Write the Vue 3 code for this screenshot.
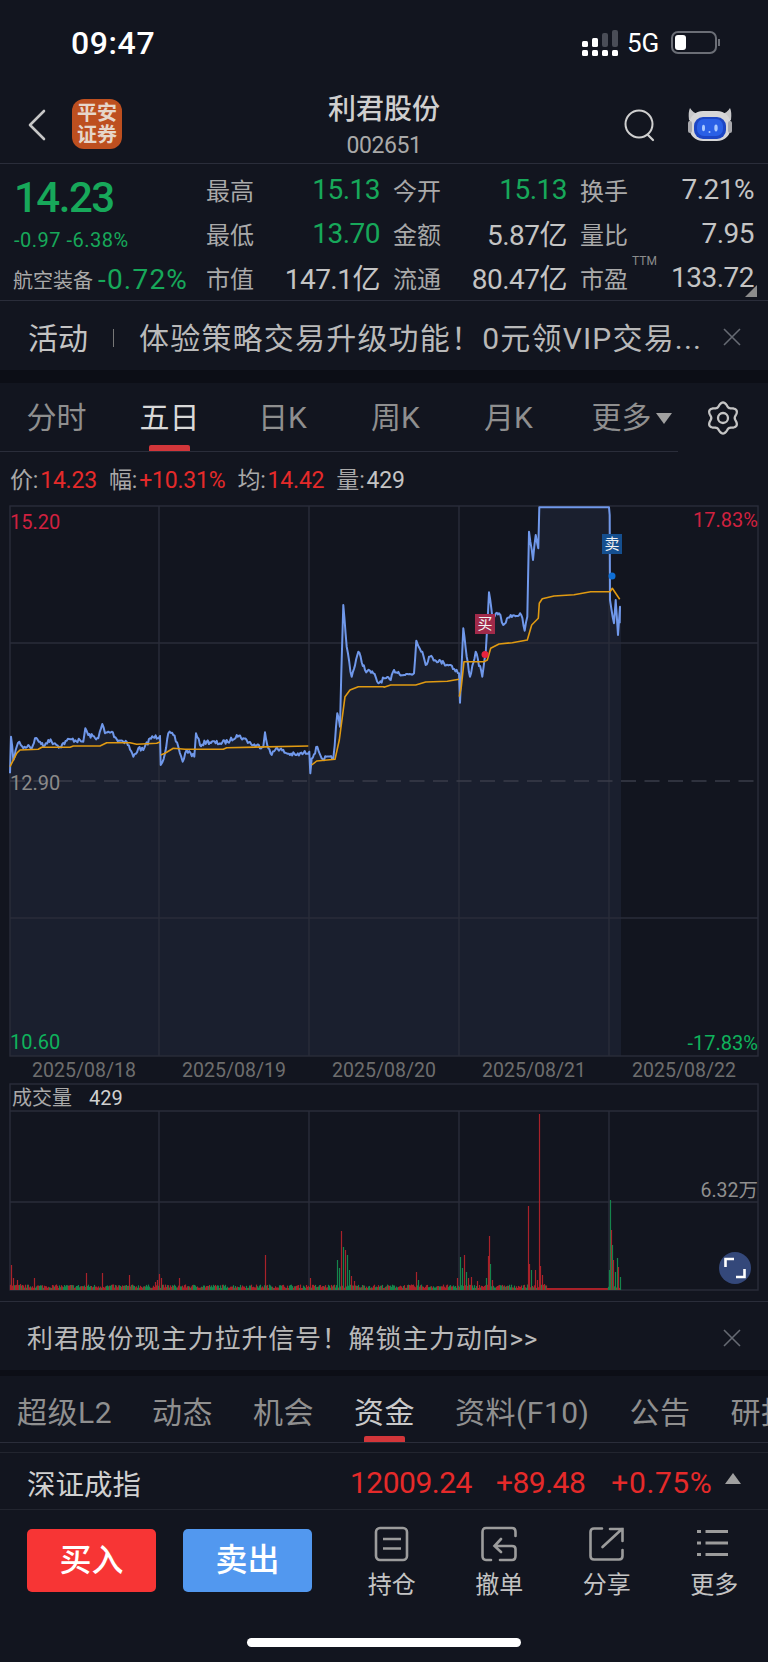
<template>
  <div class="page">
    <!-- status bar -->
    <div class="status">
      <span class="clock">09:47</span>
      <svg class="signal" width="38" height="26" viewBox="0 0 38 26">
        <rect x="20" y="3" width="6" height="14" rx="2" fill="#4a4d57" />
        <rect x="30" y="0" width="6" height="17" rx="2" fill="#4a4d57" />
        <rect x="0" y="11" width="6" height="6" rx="1.5" fill="#fff" />
        <rect x="10" y="8" width="6" height="9" rx="1.5" fill="#fff" />
        <rect x="0" y="20" width="6" height="6" rx="1.5" fill="#fff" />
        <rect x="10" y="20" width="6" height="6" rx="1.5" fill="#fff" />
        <rect x="20" y="20" width="6" height="6" rx="1.5" fill="#fff" />
        <rect x="30" y="20" width="6" height="6" rx="1.5" fill="#fff" />
      </svg>
      <span class="net">5G</span>
      <div class="battery"><div class="battery-fill"></div></div>
      <div class="battery-nub"></div>
    </div>

    <!-- title -->
    <div class="header">
      <svg class="back" width="20" height="32" viewBox="0 0 20 32">
        <path d="M17 2 L3 16 L17 30" fill="none" stroke="#c6c6c6" stroke-width="2.6" stroke-linecap="round" stroke-linejoin="round" />
      </svg>
      <div class="logo">平安<br />证券</div>
      <div class="title">
        <div class="name">利君股份</div>
        <div class="code">002651</div>
      </div>
      <svg class="search" width="34" height="34" viewBox="0 0 34 34">
        <circle cx="15" cy="15" r="13.5" fill="none" stroke="#cfcfcf" stroke-width="2" />
        <path d="M24 26 L29 31" stroke="#cfcfcf" stroke-width="2.2" stroke-linecap="round" />
      </svg>
      <svg class="robot" width="44" height="34" viewBox="0 0 44 34">
        <path d="M1 12 Q0 4 2 0 Q5 5 10 6 L34 6 Q39 5 42 0 Q44 4 43 12 Z" fill="#c8c8ca" />
        <rect x="1" y="3" width="42" height="30" rx="14" fill="#d6d6d8" />
        <rect x="0" y="13" width="4" height="12" rx="2" fill="#a9a9ad" />
        <rect x="40" y="13" width="4" height="12" rx="2" fill="#a9a9ad" />
        <rect x="6" y="9" width="32" height="22" rx="9" fill="#1d46c4" />
        <rect x="9" y="11" width="26" height="17" rx="7" fill="#2a60e6" />
        <ellipse cx="15.5" cy="20" rx="1.5" ry="3.2" fill="#a9c8ff" />
        <ellipse cx="28" cy="20" rx="1.7" ry="3.4" fill="#a9c8ff" />
        <circle cx="21.5" cy="24" r="1" fill="#a9c8ff" />
      </svg>
    </div>

    <!-- quote -->
    <div class="quote">
      <div class="quote-left">
        <div class="last">14.23</div>
        <div class="change">-0.97 -6.38%</div>
        <div class="sector"><span>航空装备</span><b>-0.72%</b></div>
      </div>
      <div class="stats">
        <div v-for="s in stats" :key="s.label" class="stat">
          <span class="stat-label">{{ s.label }}<sup v-if="s.ttm">TTM</sup></span>
          <span class="stat-value" :class="{ up: s.green }">{{ s.value }}</span>
        </div>
      </div>
      <div class="corner"></div>
    </div>

    <!-- activity banner -->
    <div class="banner">
      <span class="tag">活动</span>
      <i class="sep"></i>
      <span class="promo">体验策略交易升级功能！0元领VIP交易...</span>
      <svg class="close" width="18" height="18" viewBox="0 0 18 18">
        <path d="M1 1 L17 17 M17 1 L1 17" stroke="#666a73" stroke-width="1.6" />
      </svg>
    </div>
    <div class="band"></div>

    <!-- chart tabs -->
    <div class="chart-tabs">
      <div class="chart-tab-list">
        <div v-for="t in chartTabs" :key="t" class="chart-tab" :class="{ active: t === '五日' }">
          {{ t }}<i v-if="t === '更多'" class="caret"></i>
        </div>
      </div>
      <svg class="gear" width="34" height="34" viewBox="0 0 34 34">
        <path :d="gearPath" fill="none" stroke="#c4c4c4" stroke-width="2.3" stroke-linejoin="round" />
        <circle cx="17" cy="17" r="5" fill="none" stroke="#c4c4c4" stroke-width="2.3" />
      </svg>
    </div>

    <div class="info">
      <span>价:<em>14.23</em></span>
      <span>幅:<em>+10.31%</em></span>
      <span>均:<em>14.42</em></span>
      <span>量:<strong>429</strong></span>
    </div>

    <!-- price chart -->
    <div class="price-chart">
      <svg width="751" height="553" viewBox="9 505 751 553">
        <polygon :points="fillPoints" fill="#1a1f2e" />
        <rect x="10" y="506" width="748" height="550" fill="none" stroke="#2a2d3a" stroke-width="1.4" />
        <path d="M159 506V1056M309 506V1056M459 506V1056M609 506V1056M10 643H758M10 918H758" stroke="#2a2d3a" stroke-width="1.4" />
        <path d="M10 781H758" stroke="#3a3d49" stroke-width="1.4" stroke-dasharray="15 8.5" />
        <polyline :points="pricePoints" fill="none" stroke="#7098ea" stroke-width="2" stroke-linejoin="round" />
        <polyline v-for="(a, i) in avgLines" :key="i" :points="a" fill="none" stroke="#e09a12" stroke-width="1.6" stroke-linejoin="round" />
        <circle cx="485" cy="654.5" r="3.5" fill="#e8233f" />
        <circle cx="612" cy="576" r="3.5" fill="#0f6fd6" />
      </svg>
      <span class="axis tl">15.20</span>
      <span class="axis ml">12.90</span>
      <span class="axis bl">10.60</span>
      <span class="axis tr">17.83%</span>
      <span class="axis br">-17.83%</span>
      <span class="flag buy">买</span>
      <span class="flag sell">卖</span>
    </div>

    <div class="dates">
      <span v-for="d in dates" :key="d">{{ d }}</span>
    </div>

    <!-- volume chart -->
    <div class="volume-chart">
      <svg width="751" height="208" viewBox="9 1083 751 208">
        <rect x="10" y="1084" width="748" height="206" fill="none" stroke="#2a2d3a" stroke-width="1.4" />
        <path d="M159 1111V1290M309 1111V1290M459 1111V1290M609 1111V1290M10 1111H758M10 1202H758" stroke="#2a2d3a" stroke-width="1.4" />
        <path v-for="(b, i) in volumeBars" :key="i" :d="b.d" :stroke="b.c" stroke-width="1.2" />
      </svg>
      <div class="vol-label">成交量<strong>429</strong></div>
      <span class="vol-max">6.32万</span>
      <div class="expand">
        <svg width="22" height="22" viewBox="0 0 22 22">
          <path d="M1.5 10V2H10M20.5 12V20H12" fill="none" stroke="#fff" stroke-width="2.6" />
        </svg>
      </div>
    </div>

    <div class="line-gap"></div>

    <div class="banner banner-low">
      <span class="promo-low">利君股份现主力拉升信号！解锁主力动向&gt;&gt;</span>
      <svg class="close" width="18" height="18" viewBox="0 0 18 18">
        <path d="M1 1 L17 17 M17 1 L1 17" stroke="#666a73" stroke-width="1.6" />
      </svg>
    </div>
    <div class="band band-low"></div>

    <!-- info tabs -->
    <div class="info-tabs">
      <div v-for="t in infoTabs" :key="t" class="info-tab" :class="{ active: t === '资金' }">{{ t }}</div>
    </div>
    <div class="tab-gap"></div>

    <!-- index ticker -->
    <div class="index">
      <span class="index-name">深证成指</span>
      <span class="index-num">12009.24</span>
      <span class="index-num">+89.48</span>
      <span class="index-num pct">+0.75%</span>
      <i class="index-caret"></i>
    </div>

    <!-- bottom actions -->
    <div class="actions">
      <div class="btn buy-btn">买入</div>
      <div class="btn sell-btn">卖出</div>
      <div class="tools">
        <div class="tool">
          <svg width="36" height="36" viewBox="0 0 36 36">
            <rect x="2" y="2" width="31" height="32" rx="4" fill="none" stroke="#9c9c9c" stroke-width="2.6" />
            <path d="M9 13H27M9 22.5H27" stroke="#9c9c9c" stroke-width="2.6" />
          </svg>
          <span>持仓</span>
        </div>
        <div class="tool">
          <svg width="36" height="36" viewBox="0 0 36 36">
            <path d="M10 34H5Q1.5 34 1.5 30V6Q1.5 2 5 2H31Q34.5 2 34.5 6V10" fill="none" stroke="#9c9c9c" stroke-width="2.6" stroke-linecap="round" />
            <path d="M20 13L13.5 20L20 26M14 20H31Q34.5 20 34.5 23V30Q34.5 34 31 34H19" fill="none" stroke="#9c9c9c" stroke-width="2.6" stroke-linecap="round" />
          </svg>
          <span>撤单</span>
        </div>
        <div class="tool">
          <svg width="36" height="36" viewBox="0 0 36 36">
            <path d="M13 2.5H5Q1.5 2.5 1.5 6V30Q1.5 33.5 5 33.5H30Q33.5 33.5 33.5 30V24" fill="none" stroke="#9c9c9c" stroke-width="2.6" stroke-linecap="round" />
            <path d="M13.5 21L33 3M21 3H33.5V15" fill="none" stroke="#9c9c9c" stroke-width="2.6" stroke-linecap="round" />
          </svg>
          <span>分享</span>
        </div>
        <div class="tool">
          <svg width="36" height="36" viewBox="0 0 36 36">
            <path d="M1 5.5H5M9.5 5.5H32M1 17H5M9.5 17H32M1 28.5H5M9.5 28.5H32" stroke="#9c9c9c" stroke-width="2.8" />
          </svg>
          <span>更多</span>
        </div>
      </div>
    </div>
    <div class="home-bar"></div>
  </div>
</template>

<script setup>
const stats = [
  { label: '最高', value: '15.13', green: true },
  { label: '今开', value: '15.13', green: true },
  { label: '换手', value: '7.21%' },
  { label: '最低', value: '13.70', green: true },
  { label: '金额', value: '5.87亿' },
  { label: '量比', value: '7.95' },
  { label: '市值', value: '147.1亿' },
  { label: '流通', value: '80.47亿' },
  { label: '市盈', value: '133.72', ttm: true }
]
const chartTabs = ['分时', '五日', '日K', '周K', '月K', '更多']
const infoTabs = ['超级L2', '动态', '机会', '资金', '资料(F10)', '公告', '研报']
const dates = ['2025/08/18', '2025/08/19', '2025/08/20', '2025/08/21', '2025/08/22']

// six-lobed gear outline
let gearPath = ''
for (let i = 0; i <= 120; i++) {
  const a = (i / 120) * Math.PI * 2
  const r = 13.6 + 1.9 * Math.cos(6 * a)
  gearPath += (i ? 'L' : 'M') + (17 + r * Math.sin(a)).toFixed(2) + ' ' + (17 - r * Math.cos(a)).toFixed(2)
}
gearPath += 'Z'

// key points read off the reference, in crop coordinates (crop px = 3x page px)
const left = [[30,820],[33,710],[40,780],[50,740],[58,725],[70,745],[85,735],[95,745],[105,715],[120,725],[130,740],[145,720],[165,730],[180,740],[200,722],[215,718],[250,725],[256,685],[265,705],[295,715],[307,672],[315,700],[335,695],[350,718],[380,725],[400,770],[415,745],[430,750],[450,715],[480,708],[482,795],[495,760],[505,700],[520,705],[535,740],[548,785],[560,750],[583,770],[588,700],[600,735],[620,725],[660,730],[690,722],[710,705],[730,715],[760,735],[790,740],[795,697],[805,745],[815,765],[830,742],[860,760],[890,765],[928,755],[931,820],[935,775],[952,740],[965,775],[1000,775],[1012,640],[1020,680],[1024,520],[1030,315],[1040,440],[1055,530],[1075,455],[1095,510],[1120,520],[1135,550],[1152,535]]
const right = [[20,540],[30,510],[60,525],[90,520],[97,422],[115,455],[125,495],[135,470],[180,490],[200,495],[225,520],[228,608],[238,385],[248,470],[258,530],[275,455],[295,530],[305,460],[315,277],[325,350],[345,340],[358,375],[380,345],[412,345],[422,392],[430,350],[435,95],[447,180],[455,105],[463,145],[466,22],[675,22],[677,45],[678,300],[690,370],[695,300],[702,405],[708,320],[707,370]]
const toPage = (p, x0) => [x0 + p[0] / 3, 500 + p[1] / 3]
const priceKeys = [...left.map(p => toPage(p, 0)), ...right.map(p => toPage(p, 384))]

const avgA = [[30,800],[50,760],[60,750],[115,748],[125,742],[210,742],[220,738],[300,738],[320,728],[390,728],[410,733],[470,730],[480,726]]
const avgB = [[482,765],[495,760],[520,745],[555,748],[670,748],[680,743],[925,738]]
const avgC = [[935,795],[950,783],[1005,778],[1018,720],[1035,590],[1050,570],[1075,560],[1152,560]]
const avgD = [[0,562],[20,555],[95,555],[125,546],[190,544],[225,538]]
const avgE = [[226,590],[232,560],[240,485],[300,485],[310,480],[320,445],[345,432],[385,428],[430,420],[443,375],[463,355],[466,310],[475,296],[510,288],[570,284],[620,275],[678,275],[685,265],[707,298]]
const fmt = pts => pts.map(p => p[0].toFixed(1) + ',' + p[1].toFixed(1)).join(' ')
const avgLines = [
  fmt(avgA.map(p => toPage(p, 0))),
  fmt(avgB.map(p => toPage(p, 0))),
  fmt([...avgC.map(p => toPage(p, 0)), ...avgD.map(p => toPage(p, 384))]),
  fmt(avgE.map(p => toPage(p, 384)))
]

// small repeatable wobble so the line reads as tick data
let seed = 7
const rnd = () => {
  seed = (seed * 16807) % 2147483647
  return seed / 2147483647
}
const wobbled = []
priceKeys.forEach((p, i) => {
  wobbled.push(p)
  const n = priceKeys[i + 1]
  if (!n) return
  const flat = p[1] < 508 && n[1] < 508
  const steps = flat ? 0 : Math.floor((n[0] - p[0]) / 1.1)
  for (let k = 1; k < steps; k++) {
    const t = k / steps
    wobbled.push([p[0] + (n[0] - p[0]) * t, p[1] + (n[1] - p[1]) * t + (rnd() - 0.5) * 4.5])
  }
})
const pricePoints = fmt(wobbled)
const fillPoints = fmt([[10, 1056], ...priceKeys, [621, priceKeys[priceKeys.length - 1][1]], [621, 1056]])

const spikes = {
  11: 25, 13: 12, 17: 10, 20: 6, 34: 12, 86: 17, 102: 17, 129: 15, 155: 8, 157: 10, 159: 16, 161: 12, 179: 12,
  265: 35, 310: 12, 337: 30, 339: 22, 341: 59, 343: 43, 345: 40, 347: 35, 349: 20, 351: 14, 354: 9,
  416: 18, 418: 10, 457: 12, 460: 33, 462: 22, 464: 35, 466: 18, 468: 12, 471: 13, 477: 9, 486: 12, 488: 34, 489: 54, 490: 26, 492: 10,
  528: 84, 529: 26, 531: 20, 535: 20, 537: 10, 539: 176, 540: 24, 542: 15, 544: 6,
  609: 20, 610: 90, 611: 60, 612: 45, 613: 30, 615: 18, 617: 32, 618: 23, 620: 13
}
const greens = [337, 339, 343, 347, 349, 418, 460, 462, 466, 486, 490, 531, 609, 610, 612, 615, 617, 620]
const volumeBars = []
for (let x = 10; x <= 620; x++) {
  const quiet = x > 546 && x < 608
  const h = spikes[x] || (quiet ? 2 : 2 + rnd() * 3.5)
  const green = spikes[x] ? greens.includes(x) : !quiet && rnd() > 0.55
  volumeBars.push({ d: `M${x + 0.5} 1290V${(1290 - h).toFixed(1)}`, c: green ? '#15844c' : '#a8222a' })
}
</script>

<style>
body {
  background: #12151f;
}
</style>

<style scoped>
.page {
  width: 768px;
  height: 1662px;
  overflow: hidden;
  background: #12151f;
  display: flex;
  flex-direction: column;
  font-family: Roboto, "Noto Sans CJK SC", sans-serif;
  color: #a9a9a9;
}

.status {
  height: 80px;
  flex: none;
  display: flex;
  align-items: center;
  padding: 5px 0 0 71px;
  box-sizing: border-box;
  color: #fff;
}
.clock {
  font-size: 32px;
  font-weight: 500;
  letter-spacing: 0.6px;
  width: 511px;
}
.signal {
  flex: none;
}
.net {
  font-size: 26px;
  margin-left: 7px;
  width: 44px;
}
.battery {
  width: 46px;
  height: 23px;
  border: 2px solid #6b6e76;
  border-radius: 7px;
  box-sizing: border-box;
  padding: 2px;
}
.battery-fill {
  width: 11px;
  height: 100%;
  background: #fff;
  border-radius: 3px;
}
.battery-nub {
  width: 2px;
  height: 7px;
  margin-left: 1px;
  background: #6b6e76;
}

.header {
  height: 84px;
  flex: none;
  box-sizing: border-box;
  border-bottom: 1px solid #2a2d3a;
  display: flex;
  align-items: center;
  position: relative;
  padding: 0 0 0 27px;
}
.logo {
  width: 50px;
  height: 50px;
  margin: 4px 0 0 25px;
  background: #bd4f1f;
  border-radius: 12px;
  color: #e6d6ca;
  font-size: 20px;
  line-height: 22px;
  font-weight: 700;
  text-align: center;
  padding-top: 3px;
  box-sizing: border-box;
}
.back {
  margin-top: 6px;
}
.title {
  position: absolute;
  left: 0;
  right: 0;
  top: 11px;
  text-align: center;
}
.name {
  font-size: 28px;
  line-height: 38px;
  color: #cfcfcf;
  font-weight: 500;
}
.code {
  font-size: 23px;
  line-height: 30px;
  margin-top: 2px;
  letter-spacing: -0.4px;
  color: #a9a9a9;
}
.search {
  margin: 8px 0 0 502px;
}
.robot {
  margin: 7px 0 0 30px;
}

.quote {
  height: 137px;
  flex: none;
  display: flex;
  position: relative;
  box-sizing: border-box;
  border-bottom: 1px solid #2a2d3a;
}
.quote-left {
  width: 206px;
  flex: none;
  padding-left: 14px;
  box-sizing: border-box;
}
.last {
  font-size: 42px;
  line-height: 48px;
  margin-top: 10px;
  font-weight: 500;
  letter-spacing: -1.5px;
  color: #17a85a;
}
.change {
  font-size: 20px;
  line-height: 26px;
  margin-top: 5px;
  color: #17a85a;
  letter-spacing: 0.5px;
}
.sector {
  display: flex;
  align-items: center;
  margin: 9px 0 0 -1px;
  height: 34px;
  font-size: 20px;
  white-space: nowrap;
}
.sector b {
  font-size: 28px;
  font-weight: 400;
  color: #17a85a;
  letter-spacing: 1.2px;
  margin-left: 5px;
}
.stats {
  display: grid;
  grid-template-columns: repeat(3, 174px);
  grid-auto-rows: 44px;
  column-gap: 13px;
  padding-top: 3px;
}
.stat {
  display: flex;
  justify-content: space-between;
  align-items: center;
}
.stat-label {
  font-size: 24px;
  position: relative;
}
.stat-label sup {
  position: absolute;
  left: 52px;
  top: -6px;
  font-size: 12px;
  line-height: 14px;
  color: #8c8c8c;
}
.stat-value {
  font-size: 28px;
  letter-spacing: -0.5px;
  color: #c4c4c4;
}
.stat-value.up {
  color: #17a85a;
}
.corner {
  position: absolute;
  right: 11px;
  bottom: 3px;
  width: 0;
  height: 0;
  border-left: 12px solid transparent;
  border-bottom: 12px solid #8c8c8c;
}

.banner {
  height: 69px;
  flex: none;
  display: flex;
  align-items: center;
  position: relative;
  padding-left: 28px;
  white-space: nowrap;
}
.tag {
  font-size: 30px;
  color: #c4c4c4;
}
.sep {
  width: 1px;
  height: 18px;
  margin: 4px 25px 0 25px;
  background: #777;
}
.promo {
  font-size: 30px;
  letter-spacing: 1.2px;
  color: #b9b9b9;
}
.close {
  position: absolute;
  left: 723px;
  top: 27px;
}
.band {
  height: 13px;
  flex: none;
  background: #0c0e16;
}

.chart-tabs {
  height: 69px;
  flex: none;
  position: relative;
}
.chart-tab-list {
  width: 678px;
  height: 68px;
  display: flex;
  border-bottom: 1px solid #2a2d3a;
}
.chart-tab {
  width: 113px;
  height: 68px;
  flex: none;
  text-align: center;
  font-size: 30px;
  line-height: 70px;
  color: #8f8f8f;
  position: relative;
  white-space: nowrap;
}
.chart-tab:last-child {
  margin-left: 10px;
}
.chart-tab.active {
  color: #d8d8d8;
}
.chart-tab.active::after {
  content: "";
  position: absolute;
  left: 36px;
  bottom: 0;
  width: 41px;
  height: 6px;
  border-radius: 2px 2px 0 0;
  background: #d2363a;
}
.caret {
  display: inline-block;
  width: 0;
  height: 0;
  margin-left: 4px;
  vertical-align: 4px;
  border-left: 8px solid transparent;
  border-right: 8px solid transparent;
  border-top: 11px solid #a0a0a0;
}
.gear {
  position: absolute;
  left: 706px;
  top: 18px;
}

.info {
  height: 53px;
  flex: none;
  box-sizing: border-box;
  padding: 13px 0 0 10px;
  display: flex;
  gap: 12px;
  font-size: 23px;
  line-height: 32px;
  letter-spacing: -0.2px;
}
.info em {
  font-style: normal;
  margin-left: 2px;
  color: #e52a2a;
}
.info strong {
  font-weight: 400;
  margin-left: 2px;
  color: #c4c4c4;
}

.price-chart {
  height: 553px;
  flex: none;
  position: relative;
  padding-left: 9px;
}
.price-chart svg,
.volume-chart svg {
  display: block;
}
.axis {
  position: absolute;
  font-size: 20px;
  line-height: 20px;
}
.tl {
  left: 10px;
  top: 7px;
  color: #d0213f;
}
.ml {
  left: 10px;
  top: 268px;
  color: #8a8a8a;
}
.bl {
  left: 10px;
  top: 527px;
  color: #0fb25c;
}
.tr {
  right: 10px;
  top: 5px;
  color: #d0213f;
}
.br {
  right: 10px;
  top: 528px;
  color: #0fb25c;
}
.flag {
  position: absolute;
  width: 20px;
  height: 20px;
  font-size: 15px;
  line-height: 20px;
  text-align: center;
  color: #f2f2f2;
}
.buy {
  left: 475px;
  top: 109px;
  background: #a12a4a;
}
.sell {
  left: 602px;
  top: 29px;
  background: #154f8f;
}

.dates {
  height: 25px;
  flex: none;
  display: grid;
  grid-template-columns: repeat(5, 150px);
  padding-left: 9px;
  font-size: 19.5px;
  line-height: 26px;
  color: #6e6e6e;
  text-align: center;
}

.volume-chart {
  height: 208px;
  flex: none;
  position: relative;
  padding-left: 9px;
}
.vol-label {
  position: absolute;
  left: 12px;
  top: 1px;
  font-size: 20px;
  line-height: 28px;
  color: #a9a9a9;
}
.vol-label strong {
  font-weight: 400;
  color: #d0d0d0;
  margin-left: 17px;
}
.vol-max {
  position: absolute;
  right: 10px;
  top: 96px;
  font-size: 19.5px;
  line-height: 24px;
  color: #8f8f8f;
}
.expand {
  position: absolute;
  left: 719px;
  top: 169px;
  width: 32px;
  height: 32px;
  border-radius: 50%;
  background: #34487a;
  display: flex;
  align-items: center;
  justify-content: center;
}

.line-gap {
  height: 11px;
  flex: none;
  box-sizing: border-box;
  border-bottom: 1px solid #2a2d3a;
}
.banner-low {
  height: 68px;
  padding-left: 27px;
}
.banner-low .close {
  top: 27px;
}
.promo-low {
  font-size: 26px;
  letter-spacing: 0.8px;
  color: #b9b9b9;
}
.band-low {
  height: 6px;
}

.info-tabs {
  height: 67px;
  flex: none;
  box-sizing: border-box;
  border-bottom: 1px solid #2a2d3a;
  display: flex;
  gap: 40px;
  padding-left: 17px;
  white-space: nowrap;
  overflow: hidden;
}
.info-tab {
  flex: none;
  height: 66px;
  font-size: 30px;
  letter-spacing: 0.5px;
  line-height: 73px;
  color: #8f8f8f;
  position: relative;
}
.info-tab.active {
  color: #c9c9c9;
}
.info-tab.active::after {
  content: "";
  position: absolute;
  left: 10px;
  bottom: 0;
  width: 41px;
  height: 6px;
  border-radius: 2px 2px 0 0;
  background: #d2363a;
}
.tab-gap {
  height: 10px;
  flex: none;
  box-sizing: border-box;
  border-bottom: 1px solid #22252f;
}

.index {
  height: 57px;
  flex: none;
  box-sizing: border-box;
  border-bottom: 1px solid #22252f;
  display: flex;
  align-items: center;
  gap: 24px;
  padding: 2px 0 0 27px;
}
.index-name {
  font-size: 28.5px;
  color: #d0d0d0;
  width: 299px;
  white-space: nowrap;
}
.index-num {
  font-size: 30px;
  letter-spacing: -0.5px;
  color: #e52a2a;
}
.index-num.pct {
  margin-left: 2px;
  letter-spacing: 0.6px;
}
.index-caret {
  width: 0;
  height: 0;
  margin: -8px 0 0 -11px;
  border-left: 8px solid transparent;
  border-right: 8px solid transparent;
  border-bottom: 11px solid #a0a0a0;
}

.actions {
  height: 128px;
  flex: none;
  display: flex;
  align-items: flex-start;
  box-sizing: border-box;
  padding: 19px 0 0 27px;
}
.btn {
  width: 129px;
  height: 63px;
  flex: none;
  border-radius: 5px;
  color: #fff;
  font-size: 32px;
  line-height: 63px;
  text-align: center;
  font-weight: 500;
}
.buy-btn {
  background: #f73535;
}
.sell-btn {
  margin-left: 27px;
  background: #5298ef;
}
.tools {
  display: flex;
  flex: none;
  margin: -3px 0 0 26px;
}
.tool {
  width: 107.5px;
  flex: none;
  display: flex;
  flex-direction: column;
  align-items: center;
  font-size: 24px;
  line-height: 34px;
  color: #c4c4c4;
}
.tool span {
  margin-top: 6px;
}
.home-bar {
  width: 274px;
  height: 9px;
  flex: none;
  margin: 0 0 0 247px;
  background: #fff;
  border-radius: 5px;
}
</style>
